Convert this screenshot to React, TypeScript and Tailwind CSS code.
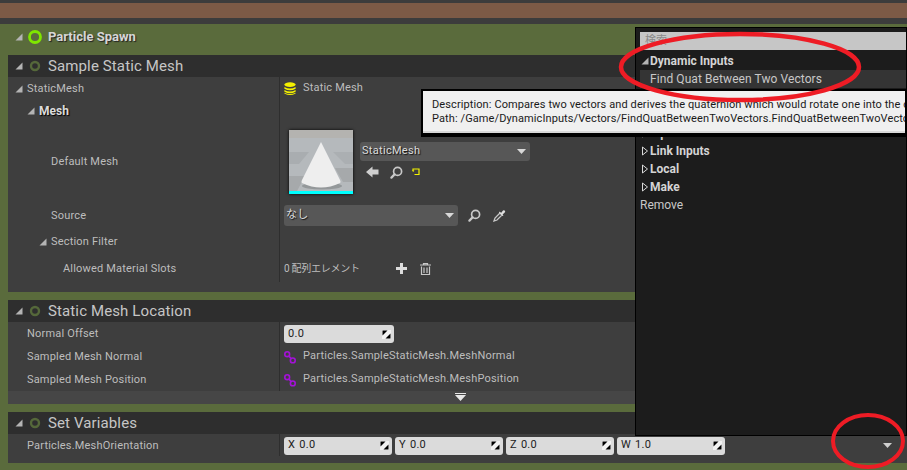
import React from "react";

const Tri = ({ className = "" }: { className?: string }) => (
  <svg width="8" height="8" viewBox="0 0 8 8" className={`shrink-0 ${className}`}>
    <path d="M7.5 0.5V7.5H0.5Z" fill="#b4b4b4" />
  </svg>
);

const Closed = () => (
  <svg width="8" height="10" viewBox="0 0 8 10" className="shrink-0 mr-[1px]">
    <path d="M1.5 1V9L6.5 5Z" fill="none" stroke="#d8d8d8" strokeWidth="1" />
  </svg>
);

const Ring = () => (
  <svg width="12" height="12" viewBox="0 0 12 12" className="shrink-0">
    <circle cx="6" cy="6" r="4" fill="none" stroke="#55683a" strokeWidth="2.4" />
  </svg>
);

const SpinArrow = () => (
  <svg width="9" height="9" viewBox="0 0 9 9" className="shrink-0">
    <rect width="9" height="9" fill="#f2f2f2" />
    <path d="M0.5 0.5H5.5L0.5 5.5Z" fill="#000" />
    <path d="M8.5 8.5H3.5L8.5 3.5Z" fill="#000" />
  </svg>
);

const Caret = ({ color = "#d8d8d8" }: { color?: string }) => (
  <svg width="9" height="5" viewBox="0 0 9 5" className="shrink-0">
    <path d="M0 0H9L4.5 5Z" fill={color} />
  </svg>
);

const Glass = () => (
  <svg width="13" height="13" viewBox="0 0 13 13" className="shrink-0">
    <circle cx="7.6" cy="5.4" r="4" fill="none" stroke="#c8c8c8" strokeWidth="1.7" />
    <path d="M4.6 8.4 1.4 11.6" stroke="#c8c8c8" strokeWidth="2.2" strokeLinecap="round" />
  </svg>
);

const Dropper = () => (
  <svg width="13" height="13" viewBox="0 0 13 13" className="shrink-0">
    <path d="M1 12 L2 9 L7 4 L9 6 L4 11Z" fill="none" stroke="#c8c8c8" strokeWidth="1.3" />
    <path d="M6.5 2.5 L8 4 L10 1.5 Q11 0.8 12 1.8 Q12.6 3 11.5 3.8 L9.5 5.5 L10.5 6.5 L9.5 7 L6 3.5Z" fill="#e0e0e0" />
  </svg>
);

const ArrowLeft = () => (
  <svg width="13" height="12" viewBox="0 0 13 12" className="shrink-0">
    <path d="M0 6 L6.5 0.5 V3.5 H12.5 V8.5 H6.5 V11.5Z" fill="#cfcfcf" />
  </svg>
);

const Browse = () => (
  <svg width="8" height="8" viewBox="0 0 8 8" className="shrink-0">
    <path d="M1 3V1H7V6.5H2.5" fill="none" stroke="#f4f400" strokeWidth="1.2" />
    <path d="M0 2.5H2.4L1.2 4Z" fill="#f4f400" />
  </svg>
);

const Stack = () => (
  <svg width="12" height="14" viewBox="0 0 12 14" className="shrink-0">
    <ellipse cx="6" cy="2.6" rx="5.6" ry="2.3" fill="#f4f000" />
    <path d="M0.4 5Q6 8 11.6 5V6.8Q6 9.8 0.4 6.8Z" fill="#f4f000" />
    <path d="M0.4 8Q6 11 11.6 8V9.8Q6 12.8 0.4 9.8Z" fill="#f4f000" />
    <path d="M0.4 10.8Q6 13.4 11.6 10.8V11.4Q6 14.6 0.4 11.4Z" fill="#f4f000" />
  </svg>
);

const Link = () => (
  <svg width="12" height="13" viewBox="0 0 12 13" className="shrink-0">
    <circle cx="3.2" cy="3.2" r="2.4" fill="none" stroke="#a412d8" strokeWidth="1.6" />
    <circle cx="8.8" cy="9.4" r="2.4" fill="none" stroke="#a412d8" strokeWidth="1.6" />
    <path d="M4.8 5 7 7.6" stroke="#a412d8" strokeWidth="1.6" />
  </svg>
);

const SectionHead = ({ title }: { title: string }) => (
  <div className="h-[22px] bg-[#2e2e2e] flex items-center pl-[7px]">
    <Tri />
    <span className="ml-[6px]"><Ring /></span>
    <span className="ml-[7px] text-[15px] text-[#c6c6c6] tracking-[0.12px]">{title}</span>
  </div>
);

const Row = ({
  h,
  indent,
  label,
  bold,
  arrow,
  top = "pt-[2px]",
  children,
}: {
  h: string;
  indent: string;
  label: string;
  bold?: boolean;
  arrow?: boolean;
  top?: string;
  children?: React.ReactNode;
}) => (
  <div className={`flex ${h}`}>
    <div className={`w-[272px] border-r border-[#2e2e2e] flex items-center ${top} ${indent}`}>
      {arrow && <Tri className="mr-[4px]" />}
      <span
        className={
          bold
            ? "text-[12px] font-bold text-[#dcdcdc] [text-shadow:1px_1px_1px_#000]"
            : "text-[11px] text-[#bdbdbd] tracking-[0.18px]"
        }
      >
        {label}
      </span>
    </div>
    <div className="flex-1 flex items-center pl-[4px] pt-[1px]">{children}</div>
  </div>
);

const Num = ({ label, w = "w-[108px]", value }: { label?: string; w?: string; value: string }) => (
  <div className={`${w} h-[18px] rounded-[3px] bg-[#dbdbdb] flex items-center pl-[4px] pr-[3px] text-[11px] text-[#222] tracking-[0.3px]`}>
    {label && <span className="mr-[4px]">{label}</span>}
    <span className="flex-1">{value}</span>
    <SpinArrow />
  </div>
);

const Combo = ({ w, h, label }: { w: string; h: string; label: string }) => (
  <div className={`${w} ${h} rounded-[3px] bg-[#575757] flex items-center justify-between pl-[2px] pr-[4px] text-[11px] text-[#dcdcdc] tracking-[0.3px] [text-shadow:1px_1px_1px_#111]`}>
    <span>{label}</span>
    <Caret />
  </div>
);

const PopupHead = ({ label, open }: { label: string; open?: boolean }) => (
  <div className="h-[18px] flex items-center pl-[1px] text-[12px] font-bold text-[#d4d4d4]">
    {open ? <Tri className="mr-[1px]" /> : <Closed />}
    <span>{label}</span>
  </div>
);

export default function App() {
  return (
    <div
      className="relative w-[907px] h-[470px] overflow-hidden bg-[#5a6b3c] text-[#c0c0c0]"
      style={{ fontFamily: "Roboto, 'Noto Sans CJK JP', sans-serif" }}
    >
      <div className="h-[3px] bg-[#3c3c3c]" />
      <div className="h-[15px] bg-[#7c5a46]" />
      <div className="h-[6px] bg-[#3c3c3c]" />

      <div className="h-[31px] flex items-center pl-[15px] pb-[6px]">
        <Tri />
        <svg width="14" height="14" viewBox="0 0 14 14" className="ml-[5px]">
          <circle cx="7" cy="7" r="5.5" fill="none" stroke="#7fe600" strokeWidth="2.8" />
        </svg>
        <span className="ml-[6px] text-[13px] font-bold text-[#d6d6d6] [text-shadow:1px_1px_1px_#222]">Particle Spawn</span>
      </div>

      <div className="ml-[8px]">
        <SectionHead title="Sample Static Mesh" />
        <div className="h-[215px] bg-[#3e3e3e]">
          <Row h="h-[22px]" indent="pl-[7px]" label="StaticMesh" arrow>
            <Stack />
            <span className="ml-[7px] text-[11px] text-[#bdbdbd] tracking-[0.18px]">Static Mesh</span>
          </Row>
          <Row h="h-[22px]" indent="pl-[19px]" label="Mesh" bold arrow top="pt-[1px]" />
          <Row h="h-[80px]" indent="pl-[43px]" label="Default Mesh">
            <div className="relative ml-[5px] w-[64px] h-[64px] overflow-hidden shadow-[0_0_3px_#000] bg-[#b3b6b8]">
              <svg width="64" height="61" viewBox="0 0 64 61" className="block">
                <rect width="64" height="8" fill="#b4b3b0" />
                <rect y="8" width="64" height="53" fill="#b5b9bc" />
                <path d="M0 22H20L10 34H0Z" fill="#a9adb0" />
                <path d="M44 22H64V34H56Z" fill="#abafb2" />
                <path d="M0 46H16L8 61H0Z" fill="#a6a9ab" />
                <path d="M46 38H64V52H54Z" fill="#a6a9ab" />
                <ellipse cx="33" cy="56" rx="20" ry="3.5" fill="#94989a" />
                <path d="M32 12 L13 50 Q12 52 13 53 Q32 62 51 53 Q52 52 51 50Z" fill="#eeeeee" />
              </svg>
              <div className="h-[3px] bg-[#00ffff]" />
            </div>
            <div className="ml-[7px] mb-[3px] flex flex-col">
              <Combo w="w-[170px]" h="h-[19px]" label="StaticMesh" />
              <div className="mt-[5px] flex items-center pl-[6px]">
                <ArrowLeft />
                <span className="ml-[11px]"><Glass /></span>
                <span className="ml-[9px]"><Browse /></span>
              </div>
            </div>
          </Row>
          <Row h="h-[28px]" indent="pl-[43px]" label="Source">
            <Combo w="w-[174px]" h="h-[21px]" label="なし" />
            <span className="ml-[10px]"><Glass /></span>
            <span className="ml-[12px]"><Dropper /></span>
          </Row>
          <Row h="h-[25px]" indent="pl-[31px]" label="Section Filter" arrow top="pt-[1px]" />
          <Row h="h-[28px]" indent="pl-[55px]" label="Allowed Material Slots">
            <span className="w-[112px] text-[10px] text-[#bdbdbd] tracking-[-0.25px]">0 配列エレメント</span>
            <svg width="11" height="11" viewBox="0 0 11 11">
              <path d="M4 0H7V4H11V7H7V11H4V7H0V4H4Z" fill="#dcdcdc" />
            </svg>
            <svg width="11" height="12" viewBox="0 0 11 12" className="ml-[13px]">
              <path d="M0 2H11M3.5 2V0.7H7.5V2M1.5 3.5V11.5H9.5V3.5M4 4.5V10M7 4.5V10" fill="none" stroke="#c8c8c8" strokeWidth="1.2" />
            </svg>
          </Row>
        </div>

        <div className="h-[8px]" />
        <SectionHead title="Static Mesh Location" />
        <div className="bg-[#3e3e3e]">
          <Row h="h-[23px]" indent="pl-[19px]" label="Normal Offset" top="pt-[1px]">
            <Num w="w-[110px]" value="0.0" />
          </Row>
          <Row h="h-[23px]" indent="pl-[19px]" label="Sampled Mesh Normal" top="pt-[1px]">
            <Link />
            <span className="ml-[7px] mb-[1px] text-[11px] text-[#bdbdbd] tracking-[0.2px]">Particles.SampleStaticMesh.MeshNormal</span>
          </Row>
          <Row h="h-[23px]" indent="pl-[19px]" label="Sampled Mesh Position" top="pt-[1px]">
            <Link />
            <span className="ml-[7px] mb-[1px] text-[11px] text-[#bdbdbd] tracking-[0.2px]">Particles.SampleStaticMesh.MeshPosition</span>
          </Row>
        </div>
        <div className="h-[13px] bg-[#464646] flex justify-center">
          <svg width="11" height="8" viewBox="0 0 11 8" className="mt-[2px] ml-[6px]">
            <path d="M0 0H11V1H0Z" fill="#e8e8e8" />
            <path d="M0 2H11L5.5 8Z" fill="#e8e8e8" />
          </svg>
        </div>

        <div className="h-[8px]" />
        <SectionHead title="Set Variables" />
        <div className="h-[29px] bg-[#3e3e3e] flex items-start justify-between pr-[15px]">
          <Row h="h-[22px]" indent="pl-[19px]" label="Particles.MeshOrientation">
            <div className="flex gap-[3px]">
              <Num label="X" value="0.0" />
              <Num label="Y" value="0.0" />
              <Num label="Z" value="0.0" />
              <Num label="W" value="1.0" />
            </div>
          </Row>
          <div className="mt-[9px]"><Caret color="#cfcfcf" /></div>
        </div>
      </div>

      {/* action selector popup */}
      <div className="absolute left-[635px] top-[27px] w-[272px] h-[409px] bg-[#1c1c1c] border border-black pl-[4px] pt-[4px]">
        <div className="h-[18px] bg-[#c6c6c6] pl-[5px] text-[11px] text-[#8a8a8a] flex items-center">検索</div>
        <div className="h-[2px]" />
        <div className="flex flex-col">
          <PopupHead label="Dynamic Inputs" open />
          <div className="h-[18px] bg-[#343434] flex items-center pl-[10px] text-[12px] text-[#c8c8c8] tracking-[0.08px]">
            Find Quat Between Two Vectors
          </div>
          <PopupHead label="Coordinate" />
          <PopupHead label="Curve" />
          <PopupHead label="Input" />
          <PopupHead label="Link Inputs" />
          <PopupHead label="Local" />
          <PopupHead label="Make" />
          <div className="h-[18px] flex items-center text-[12px] text-[#c8c8c8]">Remove</div>
        </div>
      </div>

      {/* tooltip */}
      <div className="absolute left-[421px] top-[89px] w-[486px] h-[48px] bg-[#f0f0f0] border-x-[2px] border-t-[2px] border-b-[4px] border-black pl-[9px] pt-[7px] text-[11px] leading-[14px] text-[#1a1a1a] whitespace-nowrap overflow-hidden tracking-[0.1px] shadow-[inset_0_-2px_0_#d8d8d8]">
        <div>Description: Compares two vectors and derives the quaternion which would rotate one into the other.</div>
        <div>Path: /Game/DynamicInputs/Vectors/FindQuatBetweenTwoVectors.FindQuatBetweenTwoVectors</div>
      </div>

      {/* red annotations */}
      <svg width="907" height="470" viewBox="0 0 907 470" className="absolute left-0 top-0 pointer-events-none">
        <ellipse cx="740" cy="67" rx="119" ry="33" fill="none" stroke="#ee1c25" strokeWidth="4.5" />
        <ellipse cx="868" cy="441" rx="35" ry="26" fill="none" stroke="#ee1c25" strokeWidth="4" />
      </svg>
    </div>
  );
}
